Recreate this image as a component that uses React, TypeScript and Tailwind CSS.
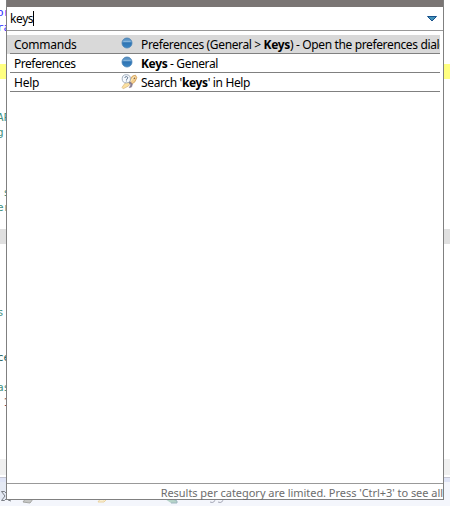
import type { ReactNode } from "react";

type CodeLine = { text?: string; className?: string };

const blank: CodeLine = {};
const teal = "text-[#3f8f7f]";

const lines: CodeLine[] = [
  { text: "or", className: "text-[#2a1fff]" },
  { text: "ra", className: "text-[#2a1fff]" },
  blank,
  blank,
  { className: "bg-[#ffff80]" },
  blank,
  blank,
  { text: "AP", className: teal },
  { text: "g", className: teal },
  blank,
  blank,
  blank,
  { text: " s", className: teal },
  { text: "er", className: teal },
  blank,
  { className: "bg-[#e0e0e0]" },
  blank,
  blank,
  blank,
  blank,
  { text: "s", className: teal },
  blank,
  blank,
  { text: "ce", className: "text-[#17605e]" },
  blank,
  { text: "as", className: teal },
  { text: " 1", className: "text-[#6a3e4e]" },
];

function Dot() {
  return (
    <svg className="block h-[12px] w-[12px]" viewBox="0 0 12 12">
      <defs>
        <linearGradient id="dot" x1="0" y1="0" x2="0" y2="1">
          <stop offset="0" stopColor="#4f86b8" />
          <stop offset="0.35" stopColor="#6ca4d3" />
          <stop offset="0.5" stopColor="#2f74b3" />
          <stop offset="1" stopColor="#3b86c3" />
        </linearGradient>
      </defs>
      <circle cx="6" cy="6" r="5" fill="url(#dot)" stroke="#4782b5" strokeWidth="0.8" />
      <path d="M2.6 4.5h6.8" stroke="#8db9dc" strokeWidth="0.8" />
    </svg>
  );
}

function HelpSearch() {
  return (
    <svg className="block h-[16px] w-[17px]" viewBox="0 0 17 16">
      <path d="M8 7.5 11.5 2l3-.8 1.3 2.5-1.8 4L11 10Z" fill="#f3cf8e" stroke="#d09a52" strokeWidth="0.8" />
      <path d="m9 8 4-5.2 1.3.6" fill="none" stroke="#fff0c9" />
      <circle cx="13.4" cy="4.2" r="0.8" fill="#785b4c" />
      <path d="M4.2 9 1 13.3l1.2 1.5L7.5 12l1.8-2.8L7 7Z" fill="#fbe0a0" stroke="#d6b583" strokeWidth="0.7" />
      <path d="m7.5 8.5 2.3 2.2-1.6 3 2.3-.6 1-2.8-2.2-2.6Z" fill="#8a7f92" stroke="#7d7389" strokeWidth="0.5" />
      <circle cx="5.3" cy="4.8" r="4.1" fill="#f8fbff" stroke="#9aa7b7" strokeWidth="0.9" />
      <path d="M3.8 3.9c.1-1.8 3-1.7 3 0 0 1-1.4 1-1.4 2m0 .6v.9" fill="none" stroke="#506985" strokeWidth="0.9" />
    </svg>
  );
}

function Row({ category, icon, selected, children }: {
  category: ReactNode;
  icon: ReactNode;
  selected?: boolean;
  children: ReactNode;
}) {
  return (
    <div className={`flex h-[19px] w-[433px] pl-[3px] ${selected ? "bg-[#d9d9d9]" : "bg-white"}`}>
      <div className="flex w-[430px] overflow-hidden border-b border-[#808080] pl-1 leading-[19px] whitespace-nowrap">
        <div className="w-[107px] shrink-0">{category}</div>
        <div className="flex w-[20px] shrink-0">{icon}</div>
        <div className="shrink-0 tracking-[-0.36px]">{children}</div>
      </div>
    </div>
  );
}

export default function App() {
  return (
    <main className="relative flex h-[506px] w-[450px] flex-col overflow-hidden bg-white font-['Noto_Sans','Open_Sans',sans-serif] text-[12px] text-black">
      <div className="flex h-[459px] shrink-0 flex-col overflow-hidden pt-1 font-['DejaVu_Sans_Mono',monospace] text-[11px] leading-[17px]">
        {lines.map((line, i) => (
          <div key={i} className={`h-[15px] shrink-0 whitespace-pre ${line.className ?? ""}`}>
            <span className="-ml-[3px]">{line.text}</span>
          </div>
        ))}
      </div>
      <div className="h-4 shrink-0 bg-[#f0f0f0]" />
      <div className="h-[2px] shrink-0 bg-white" />
      <div className="h-px shrink-0 bg-[#c4c5d2]" />
      <div className="h-1 shrink-0 bg-[#dfe4f6]" />
      <div className="h-6 shrink-0 bg-[#f4f6fc]">
        <svg className="block h-6 w-[450px]" viewBox="0 0 450 24">
          <path d="M0 0h6v18H0Z" fill="#e5eaf4" />
          <path d="M1.5 9.5h3l2 2M1.5 9.5l3.5 4.5-3.500 4.500h3l2-2M8 18l3 1" fill="none" stroke="#6d7278" strokeWidth="0.9" />
          <path d="m23 20 3-4 7 1-3 4Z" fill="#c6c7c5" stroke="#a5a6a3" />
          <path d="m98 20 3-4 2 2 4-1-3 3Z" fill="#faf0d4" stroke="#ead3a0" />
          <path d="M165 17h8l4 2v2h-6" fill="#b5d3c8" stroke="#9db6bf" />
          <path d="M210 20q5 2 5-4m3 4q5 2 5-4" fill="none" stroke="#a4a6b5" />
        </svg>
      </div>

      <section className="absolute top-0 left-[6px] flex h-[500px] w-[438px] flex-col border-x border-b border-[#808080] bg-white">
        <div className="h-[7px] shrink-0 bg-[#7a7574]" />
        <div className="flex h-[24px] shrink-0 items-center justify-between border-b border-[#999] pr-[6px] pl-[3px]">
          <div className="flex h-4 items-center">
            <span className="leading-4 tracking-[-0.4px]">keys</span>
            <span className="h-[15px] w-px bg-black" />
          </div>
          <svg className="h-[6px] w-[10px]" viewBox="0 0 10 6">
            <path d="M.5.5h9L5 5Z" fill="#4292b8" stroke="#17518c" />
          </svg>
        </div>
        <div className="flex grow flex-col pt-1">
          <Row selected category={<span className="tracking-[-0.25px]">Commands</span>} icon={<div className="pt-[2px]"><Dot /></div>}>
            Preferences (General &gt; <b>Keys</b>) - Open the preferences dialog
          </Row>
          <Row category={<span className="tracking-[-0.48px]">Preferences</span>} icon={<div className="pt-[2px]"><Dot /></div>}>
            <b>Keys</b> - General
          </Row>
          <Row category={<span className="tracking-[-0.25px]">Help</span>} icon={<div className="pt-[1px]"><HelpSearch /></div>}>
            Search '<b>keys</b>' in Help
          </Row>
        </div>
        <div className="flex h-[16px] shrink-0 items-center justify-end border-t border-[#999] text-[11px] whitespace-nowrap text-[#6d6d6d]">
          <span className="pt-[2px] leading-[15px] tracking-[-0.04px]">Results per category are limited. Press 'Ctrl+3' to see all</span>
        </div>
      </section>
    </main>
  );
}
